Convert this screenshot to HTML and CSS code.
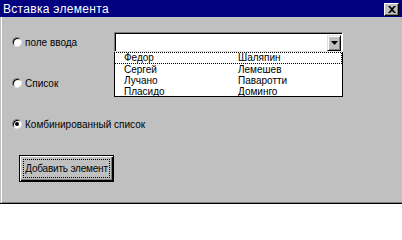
FILE: index.html
```html
<!DOCTYPE html>
<html lang="ru">
<head>
<meta charset="utf-8">
<title>Вставка элемента</title>
<link rel="stylesheet" href="styles.css">
</head>
<body>
<div class="window">
  <div class="titlebar">
    <span class="title">Вставка элемента</span>
    <span class="close">
      <svg width="8" height="7" viewBox="0 0 8 7"><path d="M0 0h2l2 2 2-2h2L5 3.5 8 7H6L4 5 2 7H0l3-3.5z" fill="#000"/></svg>
    </span>
  </div>
  <div class="body">
    <div class="left">
      <label class="opt">
        <span class="radio"></span>
        <span>поле ввода</span>
      </label>
      <label class="opt">
        <span class="radio"></span>
        <span>Список</span>
      </label>
      <label class="opt">
        <span class="radio checked"></span>
        <span>Комбинированный список</span>
      </label>
      <button class="btn"><span class="focus">Добавить элемент</span></button>
    </div>
    <div class="right">
      <div class="combo">
        <div class="combo-btn">
          <svg width="7" height="4" viewBox="0 0 7 4"><path d="M0 0h7L3.5 4z" fill="#000"/></svg>
        </div>
      </div>
      <div class="list">
        <div class="row sel"><span class="c1">Федор</span><span>Шаляпин</span></div>
        <div class="row"><span class="c1">Сергей</span><span>Лемешев</span></div>
        <div class="row"><span class="c1">Лучано</span><span>Паваротти</span></div>
        <div class="row"><span class="c1">Пласидо</span><span>Доминго</span></div>
      </div>
    </div>
  </div>
</div>
</body>
</html>
```
FILE: styles.css
```css
html, body {
  margin: 0;
  padding: 0;
  background: #ffffff;
}
body {
  width: 402px;
  height: 209px;
  overflow: hidden;
  font-family: "Liberation Sans", Arial, sans-serif;
}
.window {
  width: 402px;
  background: #c0c0c0;
  border-bottom: 1px solid #000;
}
.titlebar {
  height: 17px;
  background: #000080;
  display: flex;
  align-items: center;
  justify-content: space-between;
  padding: 0 3px 0 3px;
  box-sizing: border-box;
}
.title {
  color: #fff;
  font-size: 12px;
  line-height: 12px;
  letter-spacing: 0.3px;
}
.close {
  width: 15px;
  height: 13px;
  box-sizing: border-box;
  background: #c0c0c0;
  border-top: 1px solid #fff;
  border-left: 1px solid #fff;
  border-right: 1px solid #000;
  border-bottom: 1px solid #000;
  box-shadow: inset -1px -1px 0 #808080;
  display: flex;
  align-items: center;
  justify-content: center;
  margin-top: 1px;
}
.body {
  height: 170px;
  margin-left: 1px;
  border-left: 1px solid #fff;
  border-bottom: 1px solid #808080;
  display: flex;
  padding-top: 15px;
}
.left {
  flex: 0 0 102px;
  min-width: 0;
  padding-left: 10px;
  display: flex;
  flex-direction: column;
  gap: 21px;
  white-space: nowrap;
  font-size: 10px;
}
.opt {
  height: 20px;
  display: flex;
  align-items: center;
  gap: 3px;
}
.radio {
  width: 10px;
  height: 10px;
  border-radius: 50%;
  box-sizing: border-box;
  background: #fff;
  border: 1px solid;
  border-color: #808080 #dfdfdf #dfdfdf #808080;
  box-shadow: inset 1px 1px 0 #000;
  position: relative;
  flex: 0 0 auto;
}
.radio.checked::after {
  content: "";
  position: absolute;
  left: 2px;
  top: 2px;
  width: 4px;
  height: 4px;
  border-radius: 50%;
  background: #000;
}
.btn {
  margin-left: 7px;
  width: 95px;
  height: 27px;
  padding: 3px;
  box-sizing: border-box;
  background: #c0c0c0;
  border: 1px solid #000;
  box-shadow: inset 1px 1px 0 #fff, inset -1px -1px 0 #000, inset -2px -2px 0 #808080;
  font-family: "Liberation Sans", Arial, sans-serif;
  font-size: 10px;
  color: #000;
  display: flex;
}
.focus {
  flex: 1;
  border: 1px dotted #000;
  display: flex;
  align-items: center;
  justify-content: center;
  letter-spacing: -0.2px;
}
.right {
  display: flex;
  flex-direction: column;
}
.combo {
  width: 229px;
  height: 20px;
  box-sizing: border-box;
  background: #fff;
  border-top: 1px solid #808080;
  border-left: 1px solid #808080;
  border-right: 1px solid #fff;
  border-bottom: 1px solid #dfdfdf;
  box-shadow: inset 1px 1px 0 #000;
  display: flex;
  justify-content: flex-end;
  padding: 2px 1px 1px 2px;
}
.combo-btn {
  width: 14px;
  height: 16px;
  box-sizing: border-box;
  background: #c0c0c0;
  border-top: 1px solid #dfdfdf;
  border-left: 1px solid #dfdfdf;
  border-right: 1px solid #000;
  border-bottom: 1px solid #000;
  box-shadow: inset 1px 1px 0 #fff, inset -1px -1px 0 #808080;
  display: flex;
  align-items: center;
  justify-content: center;
}
.list {
  width: 229px;
  height: 45px;
  box-sizing: border-box;
  background: #fff;
  border: 1px solid #000;
  border-top: 1px dotted #000;
  overflow: hidden;
  font-size: 10px;
}
.row {
  height: 11px;
  line-height: 11px;
  display: flex;
  padding-left: 9px;
}
.row.sel {
  height: 10px;
  line-height: 10px;
  border-bottom: 1px dotted #000;
  border-right: 1px dotted #000;
}
.c1 {
  width: 114px;
}
```
